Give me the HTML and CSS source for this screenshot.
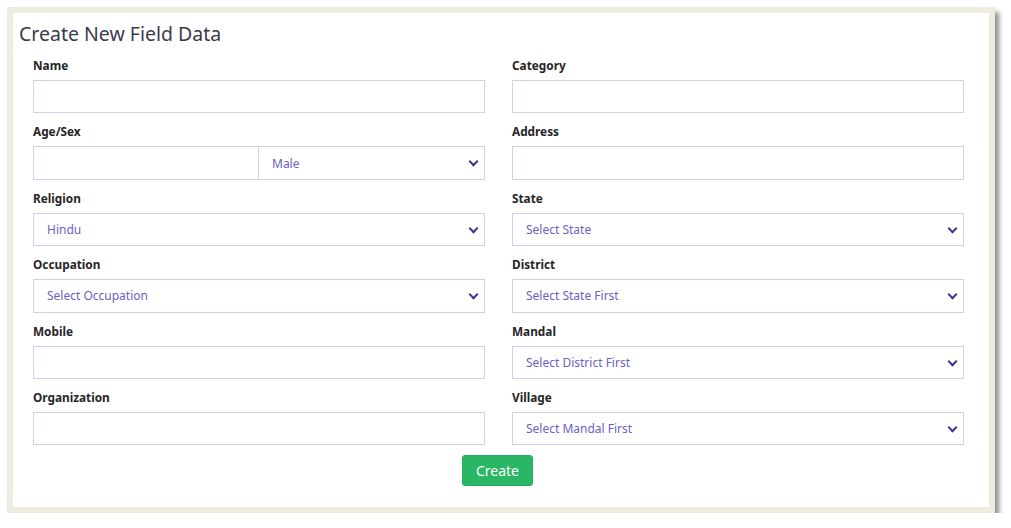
FILE: index.html
```html
<!DOCTYPE html>
<html>
<head>
<meta charset="utf-8">
<link rel="stylesheet" href="styles.css">
</head>
<body>
<div class="card">
  <h1 class="title">Create New Field Data</h1>
  <form class="form">
    <div class="grid">
      <div class="field">
        <label>Name</label>
        <input class="ctl" type="text">
      </div>
      <div class="field">
        <label>Category</label>
        <input class="ctl" type="text">
      </div>
      <div class="field">
        <label>Age/Sex</label>
        <div class="group">
          <input class="ctl" type="text">
          <div class="sel"><select class="ctl"><option>Male</option></select></div>
        </div>
      </div>
      <div class="field">
        <label>Address</label>
        <input class="ctl" type="text">
      </div>
      <div class="field">
        <label>Religion</label>
        <div class="sel"><select class="ctl"><option>Hindu</option></select></div>
      </div>
      <div class="field">
        <label>State</label>
        <div class="sel"><select class="ctl"><option>Select State</option></select></div>
      </div>
      <div class="field">
        <label>Occupation</label>
        <div class="sel"><select class="ctl"><option>Select Occupation</option></select></div>
      </div>
      <div class="field">
        <label>District</label>
        <div class="sel"><select class="ctl"><option>Select State First</option></select></div>
      </div>
      <div class="field">
        <label>Mobile</label>
        <input class="ctl" type="text">
      </div>
      <div class="field">
        <label>Mandal</label>
        <div class="sel"><select class="ctl"><option>Select District First</option></select></div>
      </div>
      <div class="field">
        <label>Organization</label>
        <input class="ctl" type="text">
      </div>
      <div class="field">
        <label>Village</label>
        <div class="sel"><select class="ctl"><option>Select Mandal First</option></select></div>
      </div>
    </div>
    <div class="actions">
      <button type="button" class="btn">Create</button>
    </div>
  </form>
</div>
</body>
</html>
```

FILE: styles.css
```css
* { box-sizing: border-box; }
html, body { margin: 0; padding: 0; background: #ffffff; }
body {
  font-family: "Noto Sans", "Open Sans", sans-serif;
  color: #2f2f2f;
}
.card {
  margin: 7px 0 0 7px;
  width: 988px;
  height: 506px;
  background: #ffffff;
  border: 6px solid #eeebdf;
  box-shadow: 4px 5px 5px rgba(0, 0, 0, 0.45);
  padding: 8px 25px 0 6px;
}
.title {
  margin: 0;
  font-size: 19.5px;
  line-height: 25px;
  font-weight: 400;
  color: #3a3b4c;
}
.form {
  margin: 11px 0 0 14px;
}
.grid {
  display: grid;
  grid-template-columns: 452px 452px;
  column-gap: 27px;
  row-gap: 0;
}
.field {
  display: flex;
  flex-direction: column;
  height: 66.4px;
}
.field label {
  font-size: 11.8px;
  line-height: 15px;
  font-weight: 700;
  color: #262626;
  padding-top: 1px;
  margin-bottom: 7px;
}
.ctl {
  display: block;
  width: 100%;
  height: 33.4px;
  border: 1px solid #cdd0ef;
  border-radius: 0;
  background: #ffffff;
  font-family: "Noto Sans", "Open Sans", sans-serif;
  font-size: 12px;
  color: #6a5fc4;
  padding: 0 13px;
  outline: none;
}
select.ctl {
  appearance: none;
  -webkit-appearance: none;
}
.sel {
  position: relative;
  width: 100%;
}
.sel::after {
  content: "";
  position: absolute;
  right: 8px;
  top: 12px;
  width: 5px;
  height: 5px;
  border-right: 2px solid #3e3592;
  border-bottom: 2px solid #3e3592;
  transform: rotate(45deg);
  pointer-events: none;
}
.group {
  display: flex;
}
.group > .ctl { width: 50%; }
.group > .sel { width: 50%; }
.group > .sel .ctl { border-left-width: 0; }
.actions {
  display: flex;
  justify-content: center;
  margin-top: -0.6px;
}
.btn {
  width: 71px;
  height: 31px;
  background: #29b765;
  border: 1px solid #26ad5f;
  border-radius: 3px;
  color: #ffffff;
  font-family: "Noto Sans", "Open Sans", sans-serif;
  font-size: 14px;
  padding: 0;
  margin-left: -2px;
}
```
